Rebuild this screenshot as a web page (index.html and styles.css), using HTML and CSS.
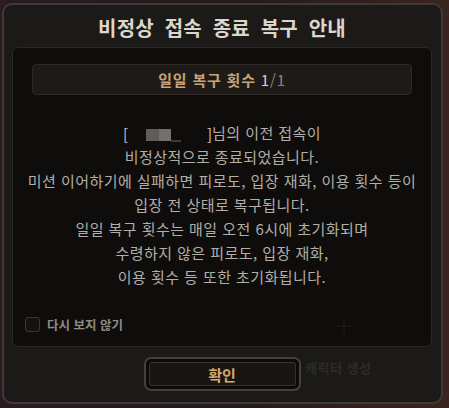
FILE: index.html
```html
<!DOCTYPE html>
<html lang="ko">
<head>
<meta charset="utf-8">
<link rel="stylesheet" href="styles.css">
</head>
<body>
<div class="dialog">
  <div class="title">비정상 접속 종료 복구 안내</div>
  <div class="panel">
    <div class="counter"><span class="gold">일일 복구 횟수</span> <span class="cur">1</span><span class="max">/1</span></div>
    <div class="message">
      <p><span class="name"><span class="br">[</span><span class="blk b1"></span><span class="blk b2"></span><span class="blk b3"></span><span class="gap"></span><span class="br">]</span></span>님의 이전 접속이</p>
      <p>비정상적으로 종료되었습니다.</p>
      <p>미션 이어하기에 실패하면 피로도, 입장 재화, 이용 횟수 등이</p>
      <p>입장 전 상태로 복구됩니다.</p>
      <p>일일 복구 횟수는 매일 오전 6시에 초기화되며</p>
      <p>수령하지 않은 피로도, 입장 재화,</p>
      <p>이용 횟수 등 또한 초기화됩니다.</p>
    </div>
    <label class="check"><span class="box"></span><span>다시 보지 않기</span></label>
    <span class="ghost-plus">+</span>
  </div>
  <div class="footer">
    <button class="ok"><span class="ok-inner">확인</span></button>
    <span class="ghost-text">캐릭터 생성</span>
  </div>
</div>
</body>
</html>
```

FILE: styles.css
```css
* { box-sizing: border-box; }
html, body { margin: 0; padding: 0; }
body {
  width: 449px;
  height: 408px;
  background: linear-gradient(90deg, #2a1b22 0%, #24191d 50%, #3a2420 100%);
  font-family: "Noto Sans CJK KR", "Noto Sans", sans-serif;
  padding: 3px 6px 4px 2px;
  overflow: hidden;
}
.dialog {
  width: 441px;
  height: 401px;
  border: 2px solid #3f3a36;
  border-radius: 10px;
  background: #1c1a18;
  padding: 0 9px 0 8px;
  display: flex;
  flex-direction: column;
  position: relative;
}
.title {
  height: 42px;
  display: flex;
  align-items: center;
  justify-content: center;
  color: #ddd6cb;
  font-size: 20px;
  font-weight: 700;
  word-spacing: 5px;
  letter-spacing: 0.2px;
  padding-top: 2px;
}
.panel {
  height: 300px;
  border: 1px solid #2a2724;
  border-radius: 6px;
  background: #0e0d0c;
  display: flex;
  flex-direction: column;
  position: relative;
}
.counter {
  margin: 16px 19px 0;
  height: 31px;
  border: 1px solid #2e2a26;
  border-radius: 4px;
  background: #1d1a17;
  display: flex;
  align-items: center;
  justify-content: center;
  font-size: 15px;
  font-weight: 700;
  letter-spacing: 0.8px;
  gap: 5px;
}
.gold { color: #c9a37a; }
.cur { color: #d8d4ce; font-weight: 400; }
.max { color: #8b8782; font-weight: 400; margin-left: -5px; }
.message {
  margin-top: 26px;
  text-align: center;
  color: #b3aea7;
  font-size: 15px;
  line-height: 24px;
  letter-spacing: 0.45px;
}
.message p { margin: 0; }
.name { display: inline-flex; align-items: center; height: 14px; vertical-align: -2px; letter-spacing: 0; }
.br { color: #cfcac3; }
.blk { display: inline-block; height: 12px; }
.b1 { width: 13px; margin-left: 18px; background: #5f5d5b; }
.b2 { width: 12px; background: #737170; }
.b3 { width: 10px; height: 2px; margin-top: 11px; background: #3a3938; }
.gap { width: 26px; }
.check {
  margin-top: auto;
  margin-bottom: 12px;
  margin-left: 12px;
  display: flex;
  align-items: center;
  gap: 7px;
  color: #8f8a84;
  font-size: 12.5px;
  font-weight: 700;
}
.box {
  width: 15px;
  height: 15px;
  border: 1.5px solid #3a3734;
  border-radius: 3px;
  background: #141312;
}
.ghost-plus {
  position: absolute;
  left: 323px;
  top: 254px;
  color: #1b1913;
  font-size: 30px;
  font-weight: 300;
}
.footer {
  flex: 1;
  display: flex;
  justify-content: center;
  align-items: flex-start;
  padding-top: 10px;
  position: relative;
}
.ok {
  width: 157px;
  height: 34px;
  padding: 3px;
  border: 2px solid #48413a;
  border-radius: 7px;
  background: #0c0b0a;
  font-family: inherit;
  cursor: pointer;
}
.ok-inner {
  display: flex;
  width: 100%;
  height: 100%;
  align-items: center;
  justify-content: center;
  border: 1px solid #37322c;
  border-radius: 3px;
  background: #171615;
  color: #d9a86b;
  font-size: 15px;
  font-weight: 700;
}
.ghost-text {
  position: absolute;
  left: 293px;
  top: 11px;
  color: #2d2a27;
  font-size: 13px;
  font-weight: 700;
  letter-spacing: 0.5px;
}
```
